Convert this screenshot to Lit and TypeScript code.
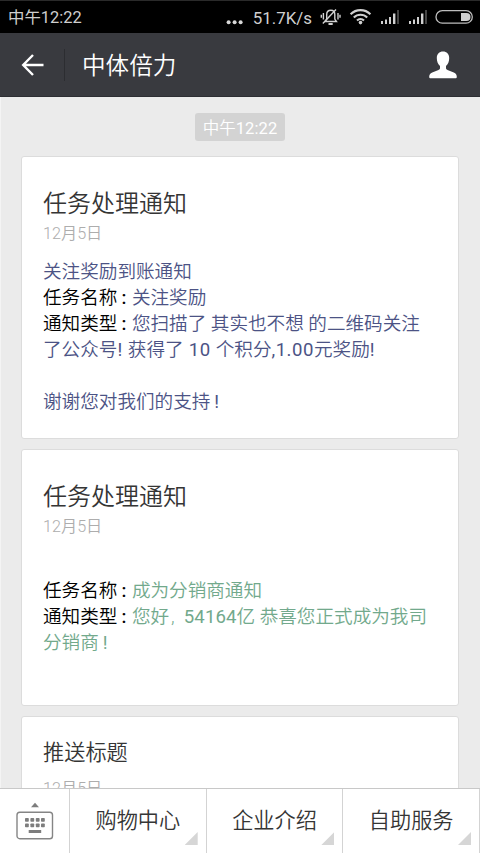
import { LitElement, html, css, svg } from "lit";
import { customElement, property } from "lit/decorators.js";

@customElement("status-bar")
class StatusBar extends LitElement {
  static styles = css`
    :host { display: flex; height: 33px; box-sizing: border-box; border-top: 1px solid #2a2a2a; background: #000; color: #cfcfcf; align-items: center; padding: 0 0 0 8px; font-size: 16.4px; line-height: 32px; font-weight: 400; }
    .time { white-space: nowrap; margin-top: 1px; }
    .speed { margin-left: auto; font-size: 16.9px; white-space: nowrap; display: flex; align-items: center; }
    .value { margin-top: 2px; }
    .dots { width: 17px; height: 32px; margin-right: 10px; }
    .icons { margin-left: 7px; display: block; }
  `;
  render() {
    const bars = (x: number) => svg`
      <rect x=${x} y="20" width="2" height="3"/><rect x=${x + 4} y="18.5" width="2" height="4.5"/>
      <rect x=${x + 8} y="16" width="2" height="7"/><rect x=${x + 12} y="12.5" width="2.4" height="10.5"/>
      <rect x=${x + 16} y="9" width="2" height="14" fill="#444"/>`;
    return html`
      <span class="time">中午12:22</span>
      <span class="speed">
        <svg class="dots" viewBox="0 0 17 32" fill="#d8d8d8"><circle cx="2.6" cy="21.3" r="2"/><circle cx="8.6" cy="21.3" r="2"/><circle cx="14.6" cy="21.3" r="2"/></svg><span class="value">51.7K/s</span>
      </span>
      <svg class="icons" width="161" height="32" viewBox="319 0 161 32" fill="#d0d0d0">
        <g fill="none" stroke="#d0d0d0" stroke-width="1.4">
          <path d="M325 20.5h11.5l-1.7-2.4v-4.6c0-2.800-1.300-4.300-3.900-4.300s-4.200 1.500-4.200 4.300v4.600z"/>
          <path d="M322.800 22.600 336 8.500M323.400 12v6.500M321.300 13.700v3M338 12v6.500M340 13.700v3"/>
          <path d="M328.500 23h4.200" stroke-width="2"/>
        </g>
        <g fill="none" stroke="#d0d0d0" stroke-width="2.1">
          <path d="M350.600 13.200a14 14 0 0 1 19.800 0M353.800 16.500a9.400 9.400 0 0 1 13.400 0M357 19.500a5 5 0 0 1 7 0"/>
        </g>
        <circle cx="360.500" cy="21.600" r="1.800"/>
        ${bars(381)}${bars(409)}
        <rect x="436" y="9.600" width="36.300" height="12.600" rx="6.300" fill="none" stroke="#bdbdbd" stroke-width="1.300"/>
        <path d="M461 12h5.500a4 4 0 0 1 0 8H461z"/>
      </svg>`;
  }
}

@customElement("chat-header")
class ChatHeader extends LitElement {
  static styles = css`
    :host { display: flex; align-items: center; height: 64px; box-sizing: border-box; background: #393a3f; color: #fff; border-bottom: 1px solid #2d2e33; }
    .back { margin-left: 21px; margin-top: 1px; }
    .rule { width: 1px; height: 32px; background: #2c2d31; margin-left: 20px; margin-top: 1px; }
    .name { margin-left: 17px; margin-top: 2px; font-size: 23.6px; line-height: 34px; }
    .person { margin-left: auto; margin-right: 23px; margin-top: 1px; }
  `;
  render() {
    return html`
      <svg class="back" width="23" height="24" viewBox="0 0 23 24" fill="none" stroke="#fff" stroke-width="2.4"><path d="M22.500 12H2.500M12 2 2.200 12 12 22"/></svg>
      <span class="rule"></span>
      <span class="name">中体倍力</span>
      <svg class="person" width="28" height="28" viewBox="0 0 28 28" fill="#fff"><path d="M14 .5c3.700 0 6.200 2.600 6.200 6.500 0 3.500-1.200 6.400-3.200 8v2c0 1 .5 1.500 1.500 1.900l6.300 2.600c2.100.9 3 2.300 3 4.300 0 1-.5 1.500-1.500 1.500H1.700C.7 27.300.2 26.800.2 25.800c0-2 .9-3.400 3-4.300l6.300-2.600c1-.4 1.500-.9 1.500-1.900v-2c-2-1.600-3.200-4.500-3.200-8C7.800 3.100 10.300.5 14 .5z"/></svg>`;
  }
}

@customElement("notice-card")
class NoticeCard extends LitElement {
  @property() heading = "";
  @property() date = "";
  static styles = css`
    :host { display: block; box-sizing: border-box; background: #fff; border: 1px solid #dcdcdc; border-radius: 3px; padding: 29px 20px 0 21px; }
    .title { font-size: 24px; line-height: 36px; color: #353535; white-space: nowrap; }
    .date { font-size: 16.2px; line-height: 22px; color: #adadad; margin-top: 1px; }
    :host([compact]) { padding-top: 18px; }
    :host([compact]) .title { font-size: 21.2px; }
    :host([compact]) .date { margin-top: 7px; }
  `;
  render() {
    return html`<div class="title">${this.heading}</div><div class="date">${this.date}</div><slot></slot>`;
  }
}

@customElement("bottom-menu")
class BottomMenu extends LitElement {
  static styles = css`
    :host { display: flex; height: 65px; box-sizing: border-box; border-top: 1px solid #c8c8c8; background: #fff; color: #353535; }
    .kb { width: 69px; box-sizing: border-box; padding: 13px 0 0 16px; }
    .item { position: relative; flex: 1; box-sizing: border-box; border-left: 1px solid #d3d3d3; font-size: 21.2px; line-height: 64px; text-align: center; }
    .item:last-child { border-right: 1px solid #d3d3d3; }
    .corner { position: absolute; right: 8px; bottom: 8px; width: 13px; height: 13px; background: #d6d6d6; clip-path: polygon(100% 0, 100% 100%, 0 100%); }
  `;
  render() {
    return html`
      <div class="kb">
        <svg width="38" height="39" viewBox="0 0 38 39" fill="#7d7d7d">
          <path d="M19 .8 23 5.200H15z"/>
          <rect x="1" y="10.200" width="35.500" height="26.500" rx="2.800" fill="#fff" stroke="#858585" stroke-width="1.400"/>
          ${[9, 14.4, 19.8, 25].map((x) => svg`<rect x=${x} y="16" width="3.800" height="3.800" rx=".8"/><rect x=${x} y="21.500" width="3.800" height="3.800" rx=".8"/>`)}
          <rect x="12.700" y="28" width="12.500" height="3"/>
        </svg>
      </div>
      ${["购物中心", "企业介绍", "自助服务"].map((t) => html`<div class="item">${t}<span class="corner"></span></div>`)}`;
  }
}

@customElement("app-root")
class AppRoot extends LitElement {
  static styles = css`
    :host { display: flex; flex-direction: column; width: 480px; height: 853px; overflow: hidden; background: #ebebeb; font-family: Roboto, "Noto Sans CJK SC", sans-serif; font-weight: 350; }
    .feed { flex: 1; min-height: 0; overflow: hidden; display: flex; flex-direction: column; padding: 16px 21px 0 20px; box-sizing: border-box; border-left: 1px solid #f4f4f4; }
    .stamp { align-self: center; width: 90px; height: 28px; box-sizing: border-box; border-radius: 3px; background: #d3d3d3; color: #fff; font-size: 16.500px; line-height: 31px; text-align: center; white-space: nowrap; flex: none; }
    notice-card { flex: none; margin-bottom: 10px; }
    .first { margin-top: 15px; height: 283px; }
    .second { height: 257px; }
    .third { height: 130px; }
    .text { font-size: 18.6px; line-height: 26px; white-space: nowrap; margin-top: 14px; color: #4c5385; }
    .green { color: #72a98c; margin-top: 40px; }
    .line { height: 26px; }
    .label { color: #000; }
    .colon { display: inline-block; width: 14.5px; box-sizing: border-box; padding-left: 4px; font-weight: 500; }
    .comma { display: inline-block; width: 10px; padding-left: 2px; box-sizing: border-box; }
    .bang { padding-left: 4px; }
    .num { font-weight: 400; letter-spacing: 0.1px; }
    .wide { font-weight: 400; letter-spacing: 0.5px; }
  `;
  render() {
    const label = (t: string) => html`<span class="label">${t}<span class="colon">:</span></span>`;
    return html`
      <status-bar></status-bar>
      <chat-header></chat-header>
      <div class="feed">
        <div class="stamp">中午<span class="num">12:22</span></div>
        <notice-card class="first" heading="任务处理通知" date="12月5日">
          <div class="text">
            <div class="line">关注奖励到账通知</div>
            <div class="line">${label("任务名称")}关注奖励</div>
            <div class="line">${label("通知类型")}您扫描了 其实也不想 的二维码关注</div>
            <div class="line">了公众号<span class="wide">! </span>获得了<span class="wide"> 10 </span>个积分<span class="wide">,1.00</span>元奖励<span class="num">!</span></div>
            <div class="line"></div>
            <div class="line">谢谢您对我们的支持<span class="num bang">!</span></div>
          </div>
        </notice-card>
        <notice-card class="second" heading="任务处理通知" date="12月5日">
          <div class="text green">
            <div class="line">${label("任务名称")}成为分销商通知</div>
            <div class="line">${label("通知类型")}您好<span class="comma">,</span><span class="num"> 54164</span>亿 恭喜您正式成为我司</div>
            <div class="line">分销商<span class="num bang">!</span></div>
          </div>
        </notice-card>
        <notice-card class="third" compact heading="推送标题" date="12月5日"></notice-card>
      </div>
      <bottom-menu></bottom-menu>`;
  }
}
